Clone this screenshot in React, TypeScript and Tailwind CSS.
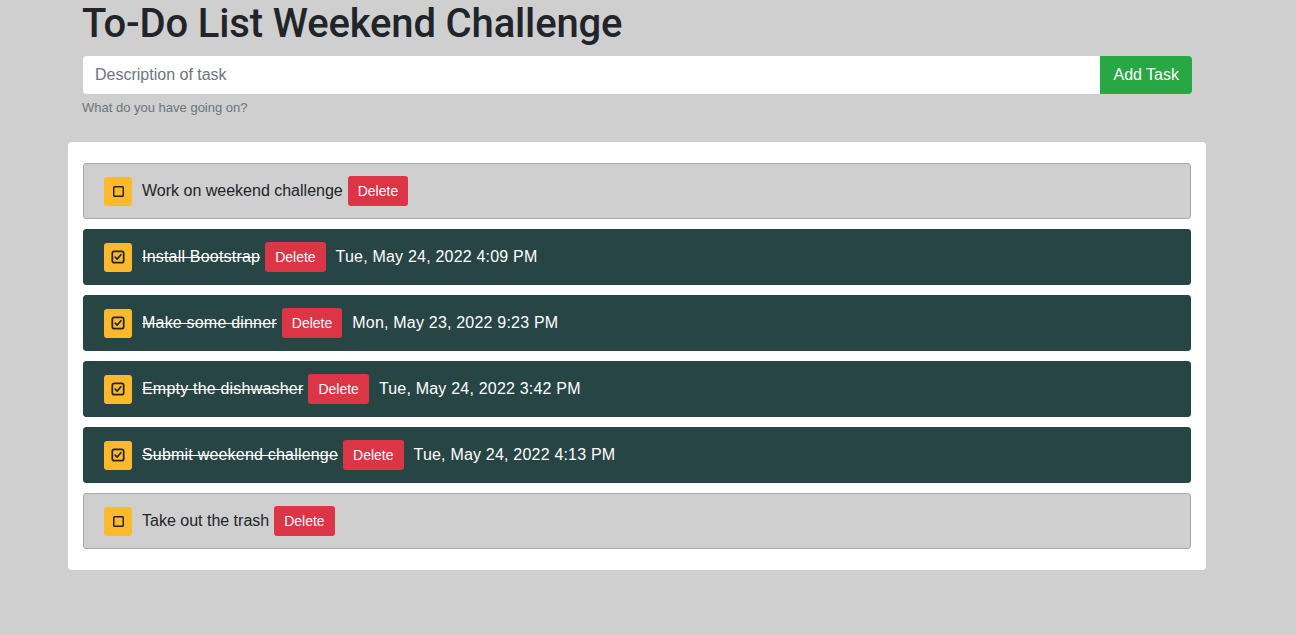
import React from "react";

type Task = { id: number; text: string; done: boolean; when?: string };

const tasks: Task[] = [
  { id: 1, text: "Work on weekend challenge", done: false },
  { id: 2, text: "Install Bootstrap", done: true, when: "Tue, May 24, 2022 4:09 PM" },
  { id: 3, text: "Make some dinner", done: true, when: "Mon, May 23, 2022 9:23 PM" },
  { id: 4, text: "Empty the dishwasher", done: true, when: "Tue, May 24, 2022 3:42 PM" },
  { id: 5, text: "Submit weekend challenge", done: true, when: "Tue, May 24, 2022 4:13 PM" },
  { id: 6, text: "Take out the trash", done: false },
];

function SquareIcon({ checked }: { checked: boolean }) {
  if (!checked) {
    return (
      <svg width="13" height="13" viewBox="0 0 13 13" fill="none">
        <rect x="1.75" y="1.75" width="9.5" height="9.5" rx="0.8" stroke="#212529" strokeWidth="1.5" />
      </svg>
    );
  }
  return (
    <svg width="14" height="14" viewBox="0 0 16 16" fill="none">
      <rect x="1.5" y="1.5" width="13" height="13" rx="2.2" stroke="#212529" strokeWidth="2" />
      <path d="M4.8 8.2 L7 10.4 L11.3 5.4" stroke="#212529" strokeWidth="1.9" strokeLinecap="round" strokeLinejoin="round" />
    </svg>
  );
}

export default function App() {
  return (
    <main className="min-h-screen w-full bg-[#cfcfcf] text-[#212529] font-['Liberation_Sans',Arial,sans-serif]">
      {/* Header */}
      <div className="pl-[82px]">
        <h1 className="text-[40px] leading-[48px] font-medium font-['Roboto',sans-serif] tracking-[-0.15px] mb-2">To-Do List Weekend Challenge</h1>
        <div className="flex w-[1109px] ml-px h-[38px]">
          <input
            className="flex-1 bg-white rounded-l-[4px] px-3 text-base placeholder:text-[#6c757d] outline-none"
            placeholder="Description of task"
          />
          <button className="bg-[#28a745] text-white text-base px-[13px] rounded-r-[4px]">Add Task</button>
        </div>
        <p className="text-[13px] leading-[20px] text-[#6c757d] mt-1">What do you have going on?</p>
      </div>

      {/* Task list */}
      <div className="ml-[68px] mt-[24px] w-[1138px] bg-white rounded-[4px] px-[15px] py-[21px] flex flex-col gap-[10px]">
        {tasks.map((t) => (
          <div
            key={t.id}
            className={
              t.done
                ? "h-14 flex items-center pl-5 rounded-[3px] border border-[#284545] bg-[#284545] text-white"
                : "h-14 flex items-center pl-5 rounded-[3px] border border-[#a9a9a9] bg-[#cfcfcf] text-[#212529]"
            }
          >
            <button className="w-7 h-[29px] rounded-[3px] bg-[#fdb92c] flex items-center justify-center mr-[10px]">
              <SquareIcon checked={t.done} />
            </button>
            <span className={t.done ? "text-base line-through tracking-[0.2px]" : "text-base"}>{t.text}</span>
            <button className="ml-[5px] h-[30px] px-[10px] rounded-[3px] bg-[#dc3545] text-white text-sm">Delete</button>
            {t.when && <span className="ml-[10px] text-base tracking-[0.2px]">{t.when}</span>}
          </div>
        ))}
      </div>
    </main>
  );
}
